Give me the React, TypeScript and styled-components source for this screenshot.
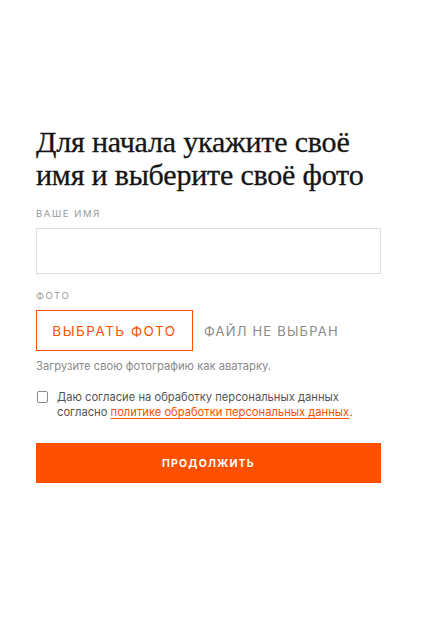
import { useState } from "react";
import styled, { createGlobalStyle } from "styled-components";

const GlobalStyle = createGlobalStyle`
  html, body {
    margin: 0;
    padding: 0;
    background: #fff;
  }
  body {
    font-family: Inter, "Liberation Sans", Arial, sans-serif;
  }
`;

const App = () => {
  const [agree, setAgree] = useState(false);

  return (
    <>
      <GlobalStyle />
      <Page>
        <Form>
          <Title>Для начала укажите своё имя и выберите своё фото</Title>

          <Field>
            <Label>Ваше имя</Label>
            <Input type="text" />
          </Field>

          <Field>
            <Label>Фото</Label>
            <FileRow>
              <FileButton type="button">Выбрать фото</FileButton>
              <FileName>Файл не выбран</FileName>
            </FileRow>
            <Hint>Загрузите свою фотографию как аватарку.</Hint>
          </Field>

          <Agree>
            <Check
              type="checkbox"
              checked={agree}
              onChange={() => setAgree(!agree)}
            />
            <AgreeText>
              Даю согласие на обработку персональных данных согласно{" "}
              <Link href="#">политике обработки персональных данных</Link>.
            </AgreeText>
          </Agree>

          <Submit type="button">Продолжить</Submit>
        </Form>
      </Page>
    </>
  );
};

const Page = styled.div`
  width: 422px;
  min-height: 635px;
  padding: 125px 41px 0 36px;
  box-sizing: border-box;
`;

const Form = styled.div`
  display: flex;
  flex-direction: column;
  width: 345px;
`;

const Title = styled.h1`
  margin: 0 0 17px;
  font-family: "Liberation Serif", "DejaVu Serif", serif;
  font-weight: 400;
  font-size: 30px;
  line-height: 33px;
  color: #151515;
  letter-spacing: -0.2px;
  -webkit-text-stroke: 0.3px #151515;
`;

const Field = styled.div`
  display: flex;
  flex-direction: column;
  margin-bottom: 16px;
`;

const Label = styled.div`
  font-size: 9.5px;
  line-height: 12px;
  letter-spacing: 1.6px;
  text-transform: uppercase;
  color: #9a9a9a;
  margin-bottom: 8px;
`;

const Input = styled.input`
  box-sizing: border-box;
  width: 100%;
  height: 46px;
  border: 1px solid #dedede;
  border-radius: 0;
  outline: none;
  padding: 0 12px;
  font: inherit;
`;

const FileRow = styled.div`
  display: flex;
  align-items: center;
  gap: 11px;
`;

const FileButton = styled.button`
  box-sizing: border-box;
  height: 41px;
  width: 157px;
  background: #fff;
  border: 1px solid #ff5000;
  color: #ff5000;
  font-family: inherit;
  font-size: 13.5px;
  letter-spacing: 1.5px;
  text-transform: uppercase;
  padding: 0;
  cursor: pointer;
`;

const FileName = styled.span`
  font-size: 13px;
  letter-spacing: 1.2px;
  text-transform: uppercase;
  color: #8a8a8a;
`;

const Hint = styled.div`
  margin-top: 8px;
  font-size: 11.2px;
  line-height: 14px;
  color: #8a8a8a;
`;

const Agree = styled.label`
  display: flex;
  align-items: flex-start;
  gap: 9px;
  margin-top: 1px;
  margin-bottom: 23px;
`;

const Check = styled.input`
  appearance: none;
  flex: none;
  box-sizing: border-box;
  width: 11px;
  height: 12px;
  margin: 1px 0 0 1px;
  border: 1px solid #8a8a8a;
  border-radius: 2px;
  background: #fff;
  &:checked {
    background: #ff5000;
    border-color: #ff5000;
  }
`;

const AgreeText = styled.span`
  font-size: 11.2px;
  line-height: 15px;
  color: #555;
`;

const Link = styled.a`
  color: #ff5000;
  text-decoration: underline;
  text-decoration-color: #ff5000;
  text-underline-offset: 2px;
`;

const Submit = styled.button`
  height: 40px;
  width: 100%;
  border: 0;
  background: #ff5000;
  color: #fff;
  font-family: inherit;
  font-weight: 700;
  font-size: 10.5px;
  letter-spacing: 1.2px;
  text-transform: uppercase;
  cursor: pointer;
`;

export default App;
